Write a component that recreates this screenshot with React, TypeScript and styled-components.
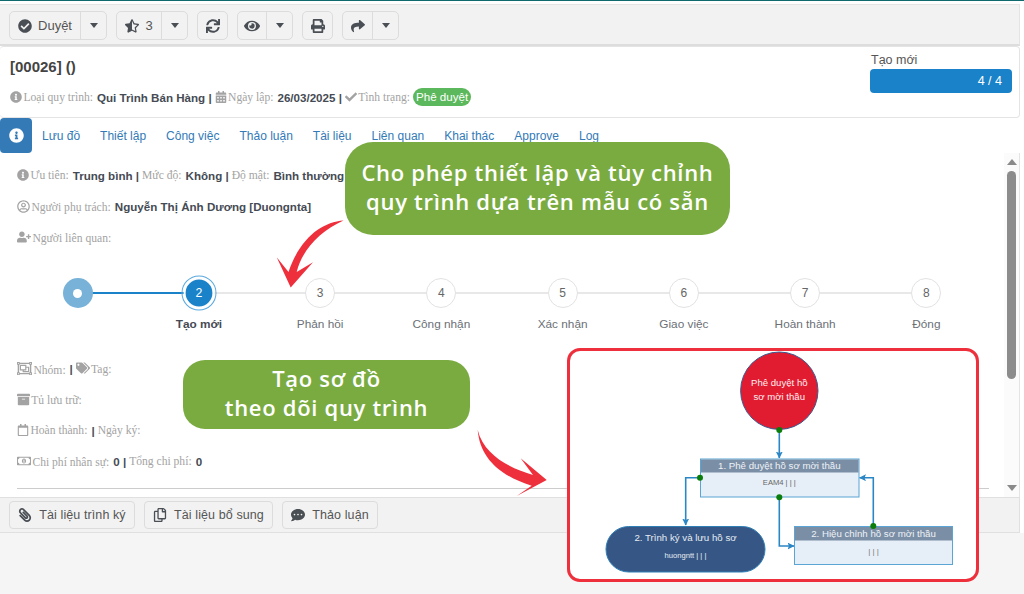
import styled, { createGlobalStyle } from "styled-components";
import {
    FaArchive,
    FaCalendarAlt,
    FaCheck,
    FaCheckCircle,
    FaCommentDots,
    FaEye,
    FaInfoCircle,
    FaPaperclip,
    FaPrint,
    FaRegCalendar,
    FaRegCopy,
    FaRegMoneyBillAlt,
    FaRegObjectGroup,
    FaRegUserCircle,
    FaShare,
    FaStarHalfAlt,
    FaSync,
    FaTags,
    FaUserPlus,
} from "react-icons/fa";

const GlobalStyle = createGlobalStyle`
    html, body {
        margin: 0;
        padding: 0;
        background: #f5f5f5;
    }
    * {
        box-sizing: border-box;
    }
`;

const SANS = `"Liberation Sans", Arial, sans-serif`;
const SERIF = `"Liberation Serif", "Times New Roman", serif`;

const Page = styled.div`
    position: relative;
    width: 1024px;
    height: 594px;
    overflow: hidden;
    background: #f5f5f5;
    font-family: ${SANS};
`;

const Shell = styled.div`
    width: 1024px;
    height: 533px;
    background: #fff;
    border-top: 1px solid #0f6a6e;
    padding: 3px 4px 0 0;
`;

const Toolbar = styled.div`
    height: 42px;
    display: flex;
    align-items: center;
    gap: 9px;
    padding-left: 9px;
    padding-top: 2px;
    background: #f2f2f2;
    border-top: 1px solid #e4e4e4;
    border-right: 1px solid #e4e4e4;
    border-bottom: 2px solid #ddd;
`;

const ToolGroup = styled.div<{ $width: number }>`
    width: ${({ $width }) => $width}px;
    height: 29px;
    display: flex;
    background: #f2f2f2;
    border: 1px solid #dcdcdc;
    border-radius: 5px;
    color: #555;
    font-size: 13px;
`;

const ToolMain = styled.div`
    flex: 1;
    display: flex;
    align-items: center;
    justify-content: center;
    gap: 6px;
    svg {
        color: #4a4f55;
        font-size: 14px;
    }
`;

const ToolCaret = styled.div`
    width: 26px;
    display: flex;
    align-items: center;
    justify-content: center;
    border-left: 1px solid #dcdcdc;
    &::after {
        content: "";
        border-left: 4px solid transparent;
        border-right: 4px solid transparent;
        border-top: 5px solid #4a4f55;
    }
`;

const HeaderCard = styled.div`
    height: 72px;
    display: flex;
    justify-content: space-between;
    background: #fff;
    border: 1px solid #e4e4e4;
    border-left: 0;
    border-radius: 4px;
`;

const HeaderLeft = styled.div`
    padding: 11px 0 0 10px;
`;

const Title = styled.div`
    font-size: 15px;
    font-weight: 700;
    line-height: 18px;
    color: #444;
`;

const HeaderMeta = styled.div`
    margin-top: 11px;
    display: flex;
    align-items: center;
    height: 20px;
`;

const Label = styled.span`
    font-family: ${SERIF};
    font-size: 11.6px;
    color: #a3a3a3;
    svg {
        color: #a3a3a3;
        font-size: 12px;
        vertical-align: -2px;
        margin-right: -1.5px;
    }
`;

const Strong = styled.b`
    font-size: 11.6px;
    color: #454b54;
    margin: 0 3px 0 4px;
    white-space: pre;
`;

const Badge = styled.span`
    display: inline-block;
    height: 18px;
    line-height: 18px;
    padding: 0 3px;
    margin-left: 3px;
    background: #5cb85c;
    border-radius: 9px;
    color: #fff;
    font-size: 11.6px;
`;

const Progress = styled.div`
    width: 142px;
    margin: 5px 7px 0 0;
`;

const ProgressName = styled.div`
    font-size: 12.5px;
    line-height: 16px;
    color: #555;
    padding-left: 1px;
`;

const ProgressBar = styled.div`
    height: 24px;
    margin-top: 1px;
    padding-right: 10px;
    background: #1a82c8;
    border-radius: 4px;
    color: #fff;
    font-size: 12.5px;
    line-height: 24px;
    text-align: right;
`;

const Tabs = styled.div`
    height: 35px;
    display: flex;
    align-items: center;
`;

const InfoTab = styled.div`
    width: 32px;
    height: 35px;
    display: flex;
    align-items: center;
    justify-content: center;
    background: #337ab7;
    border-radius: 4px;
    color: #fff;
    font-size: 15px;
`;

const Tab = styled.div`
    padding: 0 10px;
    font-size: 12px;
    color: #337ab7;
    white-space: nowrap;
`;

const Body = styled.div`
    height: 344px;
    display: flex;
    border-right: 1px solid #e4e4e4;
`;

const Details = styled.div`
    flex: 1;
    padding-top: 7px;
    overflow: hidden;
`;

const InfoRow = styled.div`
    height: 31px;
    padding-left: 17px;
    display: flex;
    align-items: center;
    white-space: nowrap;
`;

const Stepper = styled.div`
    margin: 25px 0 19px 17px;
    width: 970px;
    display: grid;
    grid-template-columns: repeat(8, 1fr);
`;

const Step = styled.div<{ $done?: boolean; $last?: boolean }>`
    position: relative;
    display: flex;
    flex-direction: column;
    align-items: center;
    &::before {
        content: ${({ $last }) => ($last ? "none" : `""`)};
        position: absolute;
        top: 14px;
        left: 50%;
        width: 100%;
        height: 2px;
        background: ${({ $done }) => ($done ? "#1a82c8" : "#e8e8e8")};
    }
`;

const StepDot = styled.div<{ $state: "done" | "current" | "todo" }>`
    position: relative;
    width: 30px;
    height: 30px;
    display: flex;
    align-items: center;
    justify-content: center;
    border-radius: 50%;
    font-size: 12px;
    ${({ $state }) =>
        $state === "done"
            ? `background: #78b2d8;`
            : $state === "current"
              ? `background: #1a82c8; color: #fff; border: 2px solid #fff; outline: 1px solid #5aa9de; outline-offset: 1px; transform: scale(1.03);`
              : `background: #fff; color: #666; border: 1px solid #e2e2e2;`}
`;

const WhiteDot = styled.span`
    width: 9px;
    height: 9px;
    border-radius: 50%;
    background: #fff;
`;

const StepLabel = styled.div<{ $active?: boolean }>`
    margin-top: 6px;
    height: 20px;
    line-height: 20px;
    font-size: 11.8px;
    color: ${({ $active }) => ($active ? "#454b54" : "#6b6f76")};
    font-weight: ${({ $active }) => ($active ? 700 : 400)};
`;

const Divider = styled.div`
    height: 1px;
    margin: 11px 15px 0 17px;
    background: #ccc;
`;

const Scrollbar = styled.div`
    width: 15px;
    display: flex;
    flex-direction: column;
    align-items: center;
    background: #fbfbfb;
`;

const ScrollArrow = styled.div<{ $down?: boolean }>`
    margin: ${({ $down }) => ($down ? "auto 0 6px" : "6px 0 5px")};
    border-left: 5px solid transparent;
    border-right: 5px solid transparent;
    ${({ $down }) =>
        $down ? "border-top: 6px solid #8a8a8a;" : "border-bottom: 6px solid #8a8a8a;"}
`;

const ScrollThumb = styled.div`
    width: 9px;
    height: 208px;
    margin-top: 1px;
    border-radius: 5px;
    background: #8c8c8c;
`;

const Footer = styled.div`
    height: 36px;
    display: flex;
    align-items: center;
    gap: 9px;
    padding-left: 9px;
    background: #f2f2f2;
    border: 1px solid #e0e0e0;
    border-left: 0;
`;

const FooterButton = styled.div<{ $width: number }>`
    width: ${({ $width }) => $width}px;
    height: 28px;
    display: flex;
    align-items: center;
    justify-content: center;
    gap: 7px;
    border: 1px solid #dcdcdc;
    border-radius: 4px;
    color: #555;
    font-size: 12.5px;
    letter-spacing: 0.1px;
    svg {
        color: #4a4f55;
        font-size: 14px;
    }
`;

const ClipIcon = styled(FaPaperclip)`
    transform: scaleX(-1);
`;

const Callout = styled.div<{ $x: number; $y: number; $w: number; $h: number; $r: number }>`
    position: absolute;
    left: ${({ $x }) => $x}px;
    top: ${({ $y }) => $y}px;
    width: ${({ $w }) => $w}px;
    height: ${({ $h }) => $h}px;
    padding-bottom: 4px;
    display: flex;
    flex-direction: column;
    align-items: center;
    justify-content: center;
    background: #7aab41;
    border-radius: ${({ $r }) => $r}px;
    color: #fff;
    font-family: "Open Sans", sans-serif;
    font-weight: 600;
    font-size: 22px;
    letter-spacing: 0.7px;
    line-height: 29px;
    text-align: center;
`;

const ArrowLayer = styled.svg`
    position: absolute;
    left: 0;
    top: 0;
    width: 1024px;
    height: 594px;
    pointer-events: none;
`;

const DiagramCard = styled.div`
    position: absolute;
    left: 567px;
    top: 348px;
    width: 412px;
    height: 234px;
    background: #fff;
    border: 3px solid #ee2f3c;
    border-radius: 13px;
    overflow: hidden;
`;

const DiagramSvg = styled.svg`
    display: block;
    width: 406px;
    height: 228px;
    font-family: ${SANS};
`;

const steps = [
    "",
    "Tạo mới",
    "Phản hồi",
    "Công nhận",
    "Xác nhận",
    "Giao việc",
    "Hoàn thành",
    "Đóng",
];

const tabs = [
    "Lưu đồ",
    "Thiết lập",
    "Công việc",
    "Thảo luận",
    "Tài liệu",
    "Liên quan",
    "Khai thác",
    "Approve",
    "Log",
];

const Diagram = () => (
    <DiagramSvg viewBox="570 351 406 228">
        <defs>
            <marker id="head" markerWidth="8" markerHeight="8" refX="6.5" refY="3.5" orient="auto" markerUnits="userSpaceOnUse">
                <path d="M0 0 L7 3.5 L0 7 L1.5 3.5 Z" fill="#2b86c5" />
            </marker>
        </defs>
        <circle cx="779.3" cy="390.7" r="38.7" fill="#e11b30" stroke="#3a5a8f" strokeWidth="1" />
        <text x="779.3" y="386" fill="#fff0f2" fontSize="9.6" textAnchor="middle">Phê duyệt hồ</text>
        <text x="779.3" y="400" fill="#fff0f2" fontSize="9.6" textAnchor="middle">sơ mời thầu</text>

        <g fill="none" stroke="#2b86c5" strokeWidth="1.6">
            <path d="M779.3 430 V458" markerEnd="url(#head)" />
            <path d="M700 477.7 H685.7 V525" markerEnd="url(#head)" />
            <path d="M779.3 497.3 V546 H794" markerEnd="url(#head)" />
            <path d="M873.3 526 V477.7 H859.5" markerEnd="url(#head)" />
        </g>

        <rect x="700.5" y="459" width="158.5" height="38" fill="#e6eef7" stroke="#5aa5d5" />
        <rect x="701" y="459.5" width="157.5" height="13" fill="#7a8ea6" />
        <text x="779.3" y="469" fill="#eef2f6" fontSize="9.7" textAnchor="middle">1. Phê duyệt hồ sơ mời thầu</text>
        <text x="779.3" y="485" fill="#666" fontSize="7.6" textAnchor="middle">EAM4 | | |</text>

        <rect x="794.5" y="526.5" width="158" height="38" fill="#e6eef7" stroke="#5aa5d5" />
        <rect x="795" y="527" width="157" height="13.5" fill="#7a8ea6" />
        <text x="873.5" y="536.5" fill="#eef2f6" fontSize="9.7" textAnchor="middle">2. Hiệu chỉnh hồ sơ mời thầu</text>
        <text x="873.5" y="554" fill="#777" fontSize="8" textAnchor="middle">| | |</text>

        <rect x="606" y="526.5" width="159" height="45.5" rx="22.7" fill="#365785" stroke="#2f7fb5" />
        <text x="685.5" y="540.5" fill="#e6ecf3" fontSize="9.7" textAnchor="middle">2. Trình ký và lưu hồ sơ</text>
        <text x="685.5" y="557.5" fill="#e6ecf3" fontSize="7.6" textAnchor="middle">huongntt | | |</text>

        <g fill="#0a7d0a">
            <circle cx="779.3" cy="430" r="3" />
            <circle cx="700" cy="477.7" r="3" />
            <circle cx="779.3" cy="497.3" r="3" />
            <circle cx="873.3" cy="526" r="3" />
        </g>
    </DiagramSvg>
);

export default function App() {
    return (
        <>
            <GlobalStyle />
            <Page>
                <Shell>
                    <Toolbar>
                        <ToolGroup $width={98}>
                            <ToolMain>
                                <FaCheckCircle /> Duyệt
                            </ToolMain>
                            <ToolCaret />
                        </ToolGroup>
                        <ToolGroup $width={72}>
                            <ToolMain>
                                <FaStarHalfAlt /> 3
                            </ToolMain>
                            <ToolCaret />
                        </ToolGroup>
                        <ToolGroup $width={31}>
                            <ToolMain>
                                <FaSync />
                            </ToolMain>
                        </ToolGroup>
                        <ToolGroup $width={56}>
                            <ToolMain>
                                <FaEye size={16} />
                            </ToolMain>
                            <ToolCaret />
                        </ToolGroup>
                        <ToolGroup $width={31}>
                            <ToolMain>
                                <FaPrint />
                            </ToolMain>
                        </ToolGroup>
                        <ToolGroup $width={57}>
                            <ToolMain>
                                <FaShare />
                            </ToolMain>
                            <ToolCaret />
                        </ToolGroup>
                    </Toolbar>

                    <HeaderCard>
                        <HeaderLeft>
                            <Title>[00026] ()</Title>
                            <HeaderMeta>
                                <Label>
                                    <FaInfoCircle /> Loại quy trình:
                                </Label>
                                <Strong>Qui Trình Bán Hàng |</Strong>
                                <Label>
                                    <FaCalendarAlt /> Ngày lập:
                                </Label>
                                <Strong>26/03/2025 |</Strong>
                                <Label>
                                    <FaCheck /> Tình trạng:
                                </Label>
                                <Badge>Phê duyệt</Badge>
                            </HeaderMeta>
                        </HeaderLeft>
                        <Progress>
                            <ProgressName>Tạo mới</ProgressName>
                            <ProgressBar>4 / 4</ProgressBar>
                        </Progress>
                    </HeaderCard>

                    <Tabs>
                        <InfoTab>
                            <FaInfoCircle />
                        </InfoTab>
                        {tabs.map((tab) => (
                            <Tab key={tab}>{tab}</Tab>
                        ))}
                    </Tabs>

                    <Body>
                        <Details>
                            <InfoRow>
                                <Label>
                                    <FaInfoCircle /> Ưu tiên:
                                </Label>
                                <Strong>Trung bình |</Strong>
                                <Label>Mức độ:</Label>
                                <Strong>Không |</Strong>
                                <Label>Độ mật:</Label>
                                <Strong>Bình thường</Strong>
                            </InfoRow>
                            <InfoRow>
                                <Label>
                                    <FaRegUserCircle size={13} /> Người phụ trách:
                                </Label>
                                <Strong>Nguyễn Thị Ánh Dương [Duongnta]</Strong>
                            </InfoRow>
                            <InfoRow>
                                <Label>
                                    <FaUserPlus size={14} /> Người liên quan:
                                </Label>
                            </InfoRow>

                            <Stepper>
                                {steps.map((name, index) => (
                                    <Step
                                        key={index}
                                        $done={index === 0}
                                        $last={index === steps.length - 1}
                                    >
                                        <StepDot
                                            $state={
                                                index === 0 ? "done" : index === 1 ? "current" : "todo"
                                            }
                                        >
                                            {index === 0 ? <WhiteDot /> : index + 1}
                                        </StepDot>
                                        <StepLabel $active={index === 1}>{name}</StepLabel>
                                    </Step>
                                ))}
                            </Stepper>

                            <InfoRow>
                                <Label>
                                    <FaRegObjectGroup size={15} /> Nhóm:
                                </Label>
                                <Strong>|</Strong>
                                <Label>
                                    <FaTags size={14} /> Tag:
                                </Label>
                            </InfoRow>
                            <InfoRow>
                                <Label>
                                    <FaArchive size={13} /> Tủ lưu trữ:
                                </Label>
                            </InfoRow>
                            <InfoRow>
                                <Label>
                                    <FaRegCalendar /> Hoàn thành:
                                </Label>
                                <Strong>|</Strong>
                                <Label>Ngày ký:</Label>
                            </InfoRow>
                            <InfoRow>
                                <Label>
                                    <FaRegMoneyBillAlt size={14} /> Chi phí nhân sự:
                                </Label>
                                <Strong>0 |</Strong>
                                <Label>Tổng chi phí:</Label>
                                <Strong>0</Strong>
                            </InfoRow>
                            <Divider />
                        </Details>
                        <Scrollbar>
                            <ScrollArrow />
                            <ScrollThumb />
                            <ScrollArrow $down />
                        </Scrollbar>
                    </Body>

                    <Footer>
                        <FooterButton $width={126}>
                            <ClipIcon /> Tài liệu trình ký
                        </FooterButton>
                        <FooterButton $width={129}>
                            <FaRegCopy /> Tài liệu bổ sung
                        </FooterButton>
                        <FooterButton $width={96}>
                            <FaCommentDots /> Thảo luận
                        </FooterButton>
                    </Footer>
                </Shell>

                <ArrowLayer viewBox="0 0 1024 594">
                    <path
                        d="M343.5 220.5 C 322 222, 300 238, 288.5 272 L276.7 257.3 L290.7 287.5 L313 262.3 L296.7 272 C 302 250, 320 231, 343.5 220.5 Z"
                        fill="#ee2f3c"
                    />
                    <path
                        d="M477.7 430 C 480 458, 500 476, 531.7 485.7 L516.7 496 L546.7 480 L520.7 458.3 L533 475 C 512 469, 484 456, 477.7 430 Z"
                        fill="#ee2f3c"
                    />
                </ArrowLayer>

                <Callout $x={345} $y={142} $w={385} $h={93} $r={28}>
                    <div>Cho phép thiết lập và tùy chỉnh</div>
                    <div>quy trình dựa trên mẫu có sẵn</div>
                </Callout>
                <Callout $x={183} $y={360} $w={287} $h={69} $r={22}>
                    <div>Tạo sơ đồ</div>
                    <div>theo dõi quy trình</div>
                </Callout>

                <DiagramCard>
                    <Diagram />
                </DiagramCard>
            </Page>
        </>
    );
}
